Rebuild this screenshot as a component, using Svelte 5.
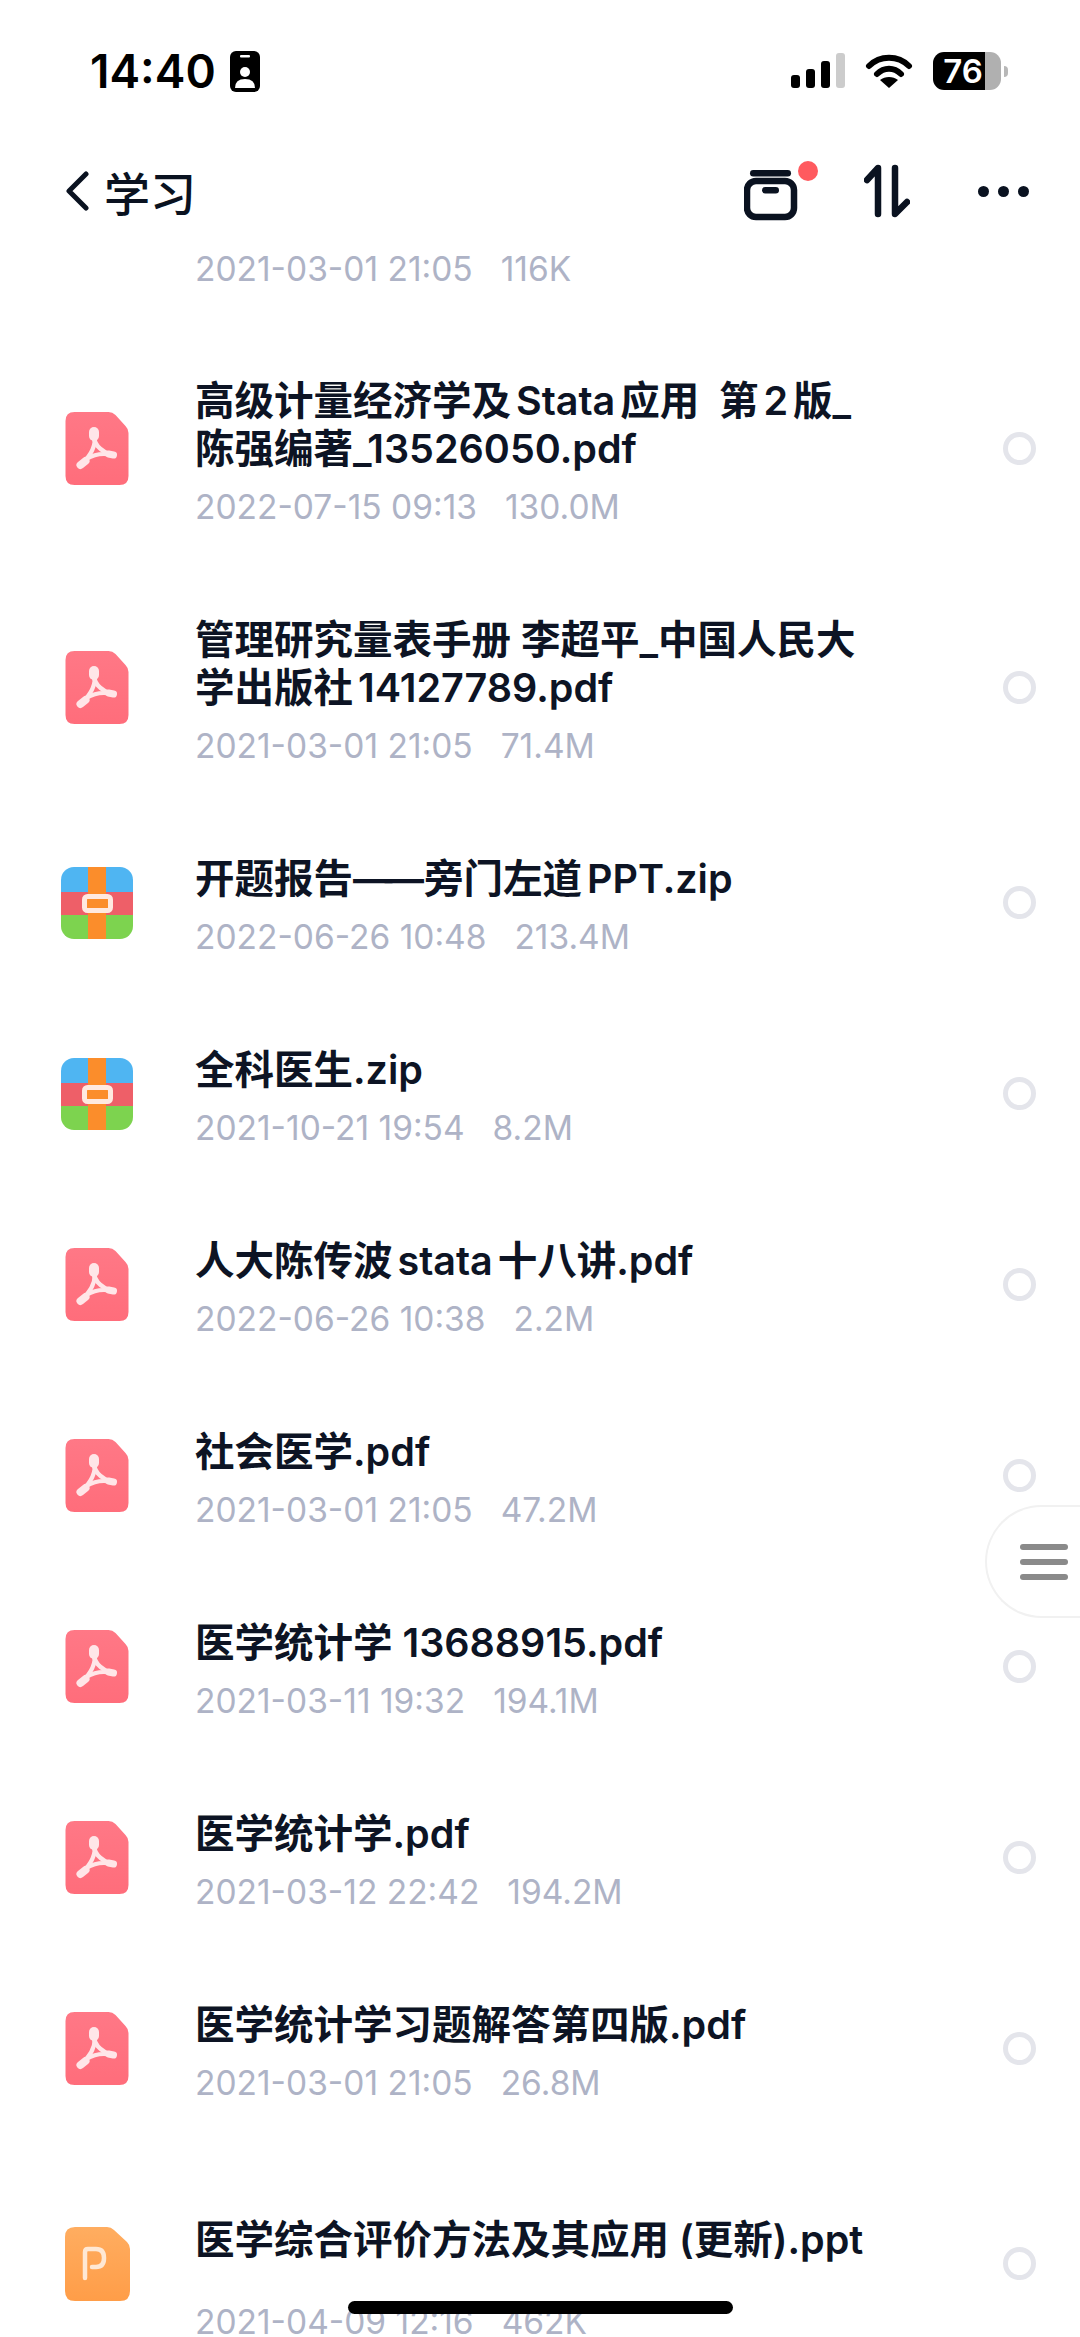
<script>
  // Files in the folder, top to bottom
  const files = [
    { type: 'pdf', name: '高级计量经济学及Stata应用  第2版_\n陈强编著_13526050.pdf', time: '2022-07-15 09:13', size: '130.0M' },
    { type: 'pdf', name: '管理研究量表手册 李超平_中国人民大\n学出版社14127789.pdf', time: '2021-03-01 21:05', size: '71.4M' },
    { type: 'zip', name: '开题报告——旁门左道PPT.zip', time: '2022-06-26 10:48', size: '213.4M' },
    { type: 'zip', name: '全科医生.zip', time: '2021-10-21 19:54', size: '8.2M' },
    { type: 'pdf', name: '人大陈传波stata十八讲.pdf', time: '2022-06-26 10:38', size: '2.2M' },
    { type: 'pdf', name: '社会医学.pdf', time: '2021-03-01 21:05', size: '47.2M' },
    { type: 'pdf', name: '医学统计学 13688915.pdf', time: '2021-03-11 19:32', size: '194.1M' },
    { type: 'pdf', name: '医学统计学.pdf', time: '2021-03-12 22:42', size: '194.2M' },
    { type: 'pdf', name: '医学统计学习题解答第四版.pdf', time: '2021-03-01 21:05', size: '26.8M' },
    { type: 'ppt', name: '医学综合评价方法及其应用 (更新).ppt', time: '2021-04-09 12:16', size: '462K', tall: true }
  ];
</script>

{#snippet fileIcon(type)}
  {#if type === 'pdf'}
    <svg class="icon" width="72" height="73" viewBox="0 0 72 73">
      <defs>
        <linearGradient id="pdfFill" x1="0" y1="0" x2="0" y2="1">
          <stop offset="0" stop-color="#ff7886" />
          <stop offset="1" stop-color="#ff6d7b" />
        </linearGradient>
      </defs>
      <path d="M12 0H43Q47 0 50 3L60 14Q63 17 63 21V64Q63 73 54 73H9Q0 73 0 64V9Q0 0 9 0Z" transform="translate(4.5 0)" fill="url(#pdfFill)" />
      <g transform="translate(4.5 0)" fill="none" stroke="#ffe6e8" stroke-linecap="round">
        <path d="M29 22C27 31 34 39 47 43" stroke-width="4.500" />
        <path d="M29 22C31 33 25 44 16 52" stroke-width="4.500" />
        <path d="M21 47C29 42 38 41 47 43" stroke-width="4" />
        <path d="M28.500 20V24" stroke-width="10" />
        <path d="M15 53L20 49" stroke-width="8" />
        <path d="M43 42L48 43" stroke-width="7" />
      </g>
    </svg>
  {:else if type === 'zip'}
    <svg class="icon" width="72" height="72" viewBox="0 0 72 72">
      <defs>
        <clipPath id="zipClip"><rect width="72" height="72" rx="13" /></clipPath>
      </defs>
      <g clip-path="url(#zipClip)">
        <rect width="72" height="25" fill="#4fb5f2" />
        <rect y="25" width="72" height="24" fill="#ee5f68" />
        <rect y="48" width="72" height="24" fill="#7dd34f" />
        <rect x="27" width="18" height="72" fill="#fb8d2b" />
      </g>
      <rect x="23.500" y="29.500" width="26" height="14" rx="3" fill="#fb8d2b" stroke="#ffe9e0" stroke-width="5" />
    </svg>
  {:else}
    <svg class="icon" width="72" height="74" viewBox="0 0 72 74">
      <defs>
        <linearGradient id="pptFill" x1="0" y1="0" x2="0" y2="1">
          <stop offset="0" stop-color="#ffad60" />
          <stop offset="1" stop-color="#ff9d48" />
        </linearGradient>
      </defs>
      <path d="M10 0H42Q46 0 49 3L62 15Q65 18 65 22V64Q65 74 55 74H10Q0 74 0 64V10Q0 0 10 0Z" transform="translate(4 0)" fill="url(#pptFill)" />
      <path d="M20 51V25Q20 22 23 22H31Q39 22 39 31Q39 40 31 40H27" transform="translate(4 0)" fill="none" stroke="#ffe8d4" stroke-width="4.500" stroke-linecap="round" stroke-linejoin="round" />
    </svg>
  {/if}
{/snippet}

<div class="screen">
  <header>
    <div class="status">
      <div class="clock">
        <span>14:40</span>
        <svg width="30" height="41" viewBox="0 0 30 41">
          <rect width="30" height="41" rx="6" fill="#000" />
          <rect x="10" y="4" width="10" height="2.500" rx="1" fill="#fff" />
          <circle cx="15" cy="21" r="5" fill="#fff" />
          <path d="M5 37Q5 28 15 28Q25 28 25 37Z" fill="#fff" />
        </svg>
      </div>
      <div class="indicators">
        <svg width="56" height="36" viewBox="0 0 56 36">
          <rect x="0" y="22" width="9" height="13" rx="3" fill="#000" />
          <rect x="15" y="16" width="9" height="19" rx="3" fill="#000" />
          <rect x="30" y="8" width="9" height="27" rx="3" fill="#000" />
          <rect x="45" y="0" width="9" height="35" rx="3" fill="#ccc" />
        </svg>
        <svg width="48" height="36" viewBox="0 0 48 36">
          <path d="M4 13C15 2 33 2 44 13" fill="none" stroke="#000" stroke-width="6" stroke-linecap="round" />
          <path d="M12 21C19 14 29 14 36 21" fill="none" stroke="#000" stroke-width="6" stroke-linecap="round" />
          <path d="M24 35L15 27C20 23 28 23 33 27Z" fill="#000" />
        </svg>
        <div class="battery"><span class="level">76</span><span class="nub"></span></div>
      </div>
    </div>

    <nav>
      <div class="back">
        <svg width="26" height="40" viewBox="0 0 26 40">
          <path d="M22 3L5 20L22 37" fill="none" stroke="#0a1220" stroke-width="5" stroke-linecap="round" stroke-linejoin="round" />
        </svg>
        <span>学习</span>
      </div>
      <div class="actions">
        <svg width="76" height="62" viewBox="0 0 76 62">
          <rect x="6" y="10" width="41" height="6.500" rx="3.250" fill="#0a1220" />
          <rect x="3" y="21" width="47" height="36" rx="9" fill="none" stroke="#0a1220" stroke-width="6.500" />
          <rect x="18" y="27" width="17" height="6.500" rx="3.250" fill="#0a1220" />
          <circle cx="64" cy="11" r="10" fill="#ff5a5f" />
        </svg>
        <svg width="46" height="54" viewBox="0 0 46 54">
          <path d="M14 50V4L3 16" fill="none" stroke="#0a1220" stroke-width="6.500" stroke-linecap="round" stroke-linejoin="round" />
          <path d="M31 4V50L43 38" fill="none" stroke="#0a1220" stroke-width="6.500" stroke-linecap="round" stroke-linejoin="round" />
        </svg>
        <div class="dots"><i></i><i></i><i></i></div>
      </div>
    </nav>
  </header>

  <div class="partial meta"><span>2021-03-01 21:05</span><span>116K</span></div>

  <ul class="list">
    {#each files as file}
      <li class="row">
        {@render fileIcon(file.type)}
        <div class="info">
          <p class="name" class:tall={file.tall}>{#each file.name.split('——') as part, i}{#if i}<span class="dash">——</span>{/if}{part}{/each}</p>
          <p class="meta"><span>{file.time}</span><span>{file.size}</span></p>
        </div>
        <span class="check"></span>
      </li>
    {/each}
  </ul>

  <div class="handle"><i></i><i></i><i></i></div>
  <div class="home-bar"></div>
</div>

<style>
  :global(body) {
    background: #fff;
  }
  .screen {
    position: relative;
    width: 1080px;
    height: 2337px;
    overflow: hidden;
    background: #fff;
    font-family: Inter, "Noto Sans CJK SC", sans-serif;
    text-autospace: normal;
  }
  header {
    height: 245px;
  }
  .status {
    display: flex;
    justify-content: space-between;
    align-items: center;
    height: 142px;
    padding: 0 79px 0 90px;
  }
  .clock {
    display: flex;
    align-items: center;
    gap: 14px;
    font-size: 46px;
    font-weight: 600;
    color: #000;
  }
  .indicators {
    display: flex;
    align-items: center;
    gap: 18px;
  }
  .battery {
    display: flex;
    position: relative;
    width: 68px;
    height: 38px;
    margin-left: 2px;
    border-radius: 11px;
    background: linear-gradient(90deg, #000 76%, #b0b0b0 76%);
  }
  .level {
    width: 100%;
    text-align: center;
    padding-right: 8px;
    box-sizing: border-box;
    font-size: 33px;
    line-height: 38px;
    font-weight: 600;
    color: #fff;
  }
  .nub {
    position: absolute;
    left: 71px;
    top: 14px;
    width: 4px;
    height: 11px;
    border-radius: 0 5px 5px 0;
    background: #b8b8b8;
  }
  nav {
    display: flex;
    justify-content: space-between;
    align-items: center;
    height: 90px;
    padding: 0 51px 0 64px;
    margin-top: 4px;
  }
  .back {
    display: flex;
    align-items: center;
    gap: 14px;
    font-size: 46px;
    font-weight: 500;
    color: #0a1220;
  }
  .actions {
    display: flex;
    align-items: center;
    gap: 44px;
  }
  .dots {
    display: flex;
    gap: 9px;
    margin-left: 24px;
  }
  .dots i {
    width: 11px;
    height: 11px;
    border-radius: 50%;
    background: #0a1220;
  }
  .meta {
    display: flex;
    gap: 28px;
    margin: 0;
    font-size: 33.500px;
    line-height: 46px;
    color: #aeb3c6;
  }
  .partial {
    padding: 1px 0 36px 195px;
  }
  .list {
    list-style: none;
    margin: 0;
    padding: 0;
  }
  .row {
    display: flex;
    align-items: center;
    padding: 39px 44px 37px 61px;
  }
  .icon {
    flex: none;
    width: 72px;
    margin-right: 62px;
  }
  .info {
    flex: 1;
    padding-top: 10px;
  }
  .name {
    margin: 0 0 11px;
    font-size: 39.500px;
    line-height: 48px;
    font-weight: 600;
    color: #0d1424;
    white-space: pre;
  }
  .dash {
    letter-spacing: -8px;
    margin-right: 8px;
  }
  /* long names reserve two lines; this one renders on one, centred in the box */
  .name.tall {
    padding: 24px 0;
  }
  .check {
    flex: none;
    box-sizing: border-box;
    width: 33px;
    height: 33px;
    border: 5px solid #e4e5eb;
    border-radius: 50%;
  }
  .handle {
    position: absolute;
    right: 0;
    top: 1505px;
    box-sizing: border-box;
    display: flex;
    flex-direction: column;
    justify-content: center;
    gap: 9px;
    width: 95px;
    height: 113px;
    padding-left: 33px;
    background: #fff;
    border: 2px solid #f1f1f1;
    border-right: 0;
    border-radius: 57px 0 0 57px;
  }
  .handle i {
    width: 48px;
    height: 6px;
    border-radius: 3px;
    background: #8a8a8a;
  }
  .home-bar {
    position: absolute;
    left: 348px;
    top: 2301px;
    width: 385px;
    height: 13px;
    border-radius: 7px;
    background: #000;
  }
</style>
